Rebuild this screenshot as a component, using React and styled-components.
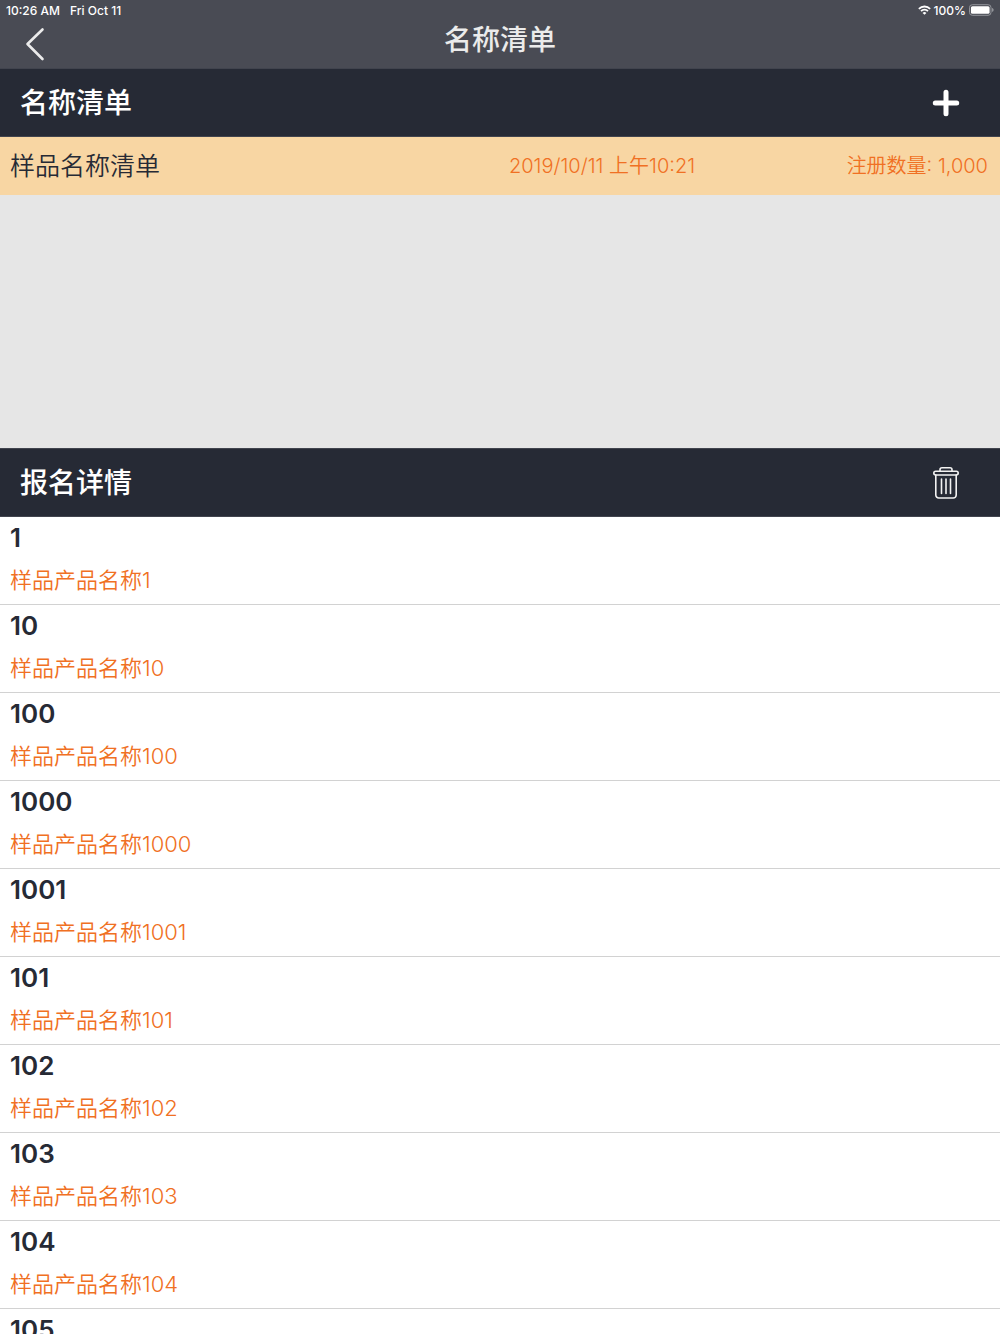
import React from "react";
import styled, {createGlobalStyle} from "styled-components";

const nameLists = [
    {
        name: '样品名称清单',
        createdAt: '2019/10/11 上午10:21',
        count: '1,000',
    },
]

const registrations = ['1', '10', '100', '1000', '1001', '101', '102', '103', '104', '105']

const App = () => {
    return (
        <Screen>
            <GlobalStyle/>
            <TopBar>
                <StatusBar>
                    <StatusGroup $gap={10}>
                        <span>10:26 AM</span>
                        <span>Fri Oct 11</span>
                    </StatusGroup>
                    <StatusGroup $gap={3}>
                        <WifiIcon/>
                        <span>100%</span>
                        <BatteryIcon/>
                    </StatusGroup>
                </StatusBar>
                <NavBar>
                    <BackButton type="button" aria-label="返回">
                        <BackIcon/>
                    </BackButton>
                    <PageTitle>名称清单</PageTitle>
                </NavBar>
            </TopBar>
            <ListPane>
                <SectionBar>
                    <SectionTitle>名称清单</SectionTitle>
                    <IconButton type="button" aria-label="添加">
                        <PlusIcon/>
                    </IconButton>
                </SectionBar>
                <List>
                    {nameLists.map((list) => (
                        <NameListRow key={list.name}>
                            <ListName>{list.name}</ListName>
                            <ListMeta>{list.createdAt}</ListMeta>
                            <ListMeta $align="right">注册数量: {list.count}</ListMeta>
                        </NameListRow>
                    ))}
                </List>
            </ListPane>
            <DetailPane>
                <SectionBar>
                    <SectionTitle>报名详情</SectionTitle>
                    <IconButton type="button" aria-label="删除">
                        <TrashIcon/>
                    </IconButton>
                </SectionBar>
                <List>
                    {registrations.map((id) => (
                        <DetailRow key={id}>
                            <DetailId>{id}</DetailId>
                            <DetailName>样品产品名称{id}</DetailName>
                        </DetailRow>
                    ))}
                </List>
            </DetailPane>
        </Screen>
    )
}

const WifiIcon = () => (
    <svg width="13" height="10" viewBox="0 0 14 11" fill="none" stroke="#fff" strokeWidth="2">
        <path d="M.8 4.200a8.800 8.800 0 0 1 12.400 0"/>
        <path d="M3.200 6.700a5.300 5.300 0 0 1 7.600 0"/>
        <path d="M7 10.800 4.900 8.700a3 3 0 0 1 4.200 0z" fill="#fff" stroke="none"/>
    </svg>
)

const BatteryIcon = () => (
    <svg width="25" height="12" viewBox="0 0 26 12" fill="none">
        <rect x=".5" y=".5" width="22.4" height="11" rx="3" stroke="#97999e"/>
        <rect x="2" y="2" width="19.4" height="8" rx="1.6" fill="#fff"/>
        <path d="M24 4v4c1-.4 1.6-1.100 1.600-2S25 4.400 24 4z" fill="#97999e"/>
    </svg>
)

const BackIcon = () => (
    <svg width="20" height="34" viewBox="0 0 20 34" fill="none" stroke="#ebebeb" strokeWidth="2.6" strokeLinecap="round" strokeLinejoin="round">
        <path d="M17.500 2.500 2.500 17l15 15"/>
    </svg>
)

const PlusIcon = () => (
    <svg width="28" height="28" viewBox="0 0 28 28" stroke="#fff" strokeWidth="5" strokeLinecap="round">
        <path d="M14 3.300v21.400M3.300 14h21.400"/>
    </svg>
)

const TrashIcon = () => (
    <svg width="28" height="34" viewBox="0 0 28 34" fill="none" stroke="#f2f2f2" strokeWidth="1.600" strokeLinecap="round" strokeLinejoin="round">
        <rect x="1.800" y="5.200" width="24.400" height="3.800" rx="1.900"/>
        <path d="M8 5.200V3.800a2 2 0 0 1 2-2h8a2 2 0 0 1 2 2v1.400"/>
        <path d="M3.800 9v20a3 3 0 0 0 3 3h14.400a3 3 0 0 0 3-3V9"/>
        <path d="M9.500 13v14.500M14 13v14.500M18.500 13v14.500"/>
    </svg>
)

const GlobalStyle = createGlobalStyle`
  * {
    box-sizing: border-box;
  }

  body {
    margin: 0;
    background: #fff;
    font-family: Inter, "Noto Sans CJK SC", sans-serif;
    color: #262a35;
  }
`

const Screen = styled.div`
  display: flex;
  flex-direction: column;
  height: 100vh;
  overflow: hidden;
`

const TopBar = styled.header`
  flex: none;
  background: #494b54;
`

const StatusBar = styled.div`
  display: flex;
  justify-content: space-between;
  height: 20px;
  padding: 0 6px;
  font-size: 12px;
  font-weight: 500;
  color: #fff;
`

const StatusGroup = styled.div`
  display: flex;
  align-items: center;
  gap: ${(props) => props.$gap}px;
`

const NavBar = styled.div`
  display: grid;
  grid-template-columns: 1fr auto 1fr;
  height: 48px;
`

const BackButton = styled.button`
  display: flex;
  align-items: center;
  justify-self: start;
  padding: 0 25px;
  border: none;
  background: none;
`

const PageTitle = styled.h1`
  margin: 0;
  font-size: 28px;
  font-weight: 500;
  line-height: 40px;
  color: #ebebeb;
`

const ListPane = styled.section`
  flex: none;
  min-height: 380px;
  background: #e6e6e6;
`

const DetailPane = styled.section`
  flex: 1;
  min-height: 0;
  overflow-y: auto;
  scrollbar-width: none;
`

const SectionBar = styled.div`
  display: flex;
  align-items: center;
  justify-content: space-between;
  height: 69px;
  padding: 0 40px 0 20px;
  border: solid #41444e;
  border-width: 1px 0;
  background: #262a35;
`

const SectionTitle = styled.h2`
  margin: 0;
  font-size: 28px;
  font-weight: 500;
  line-height: 40px;
  color: #fff;
`

const IconButton = styled.button`
  display: flex;
  padding: 0;
  border: none;
  background: none;
`

const List = styled.ul`
  margin: 0;
  padding: 0;
  list-style: none;
`

const NameListRow = styled.li`
  display: grid;
  grid-template-columns: 50fr 26fr 22fr;
  align-items: center;
  height: 58px;
  padding: 0 12px 4px 10px;
  background: #f8d6a3;
`

const ListName = styled.span`
  font-size: 25px;
  font-weight: 350;
`

const ListMeta = styled.span`
  font-size: 20px;
  font-weight: 350;
  text-align: ${(props) => props.$align || 'left'};
  white-space: nowrap;
  color: #f07023;
`

const DetailRow = styled.li`
  height: 88px;
  padding: 3px 10px 0;
  border-bottom: 1px solid #d2d2d2;
`

const DetailId = styled.div`
  font-size: 26px;
  font-weight: 600;
  line-height: 36px;
`

const DetailName = styled.div`
  margin-top: 8px;
  font-size: 22px;
  font-weight: 350;
  line-height: 32px;
  color: #f07023;
`

export default App
